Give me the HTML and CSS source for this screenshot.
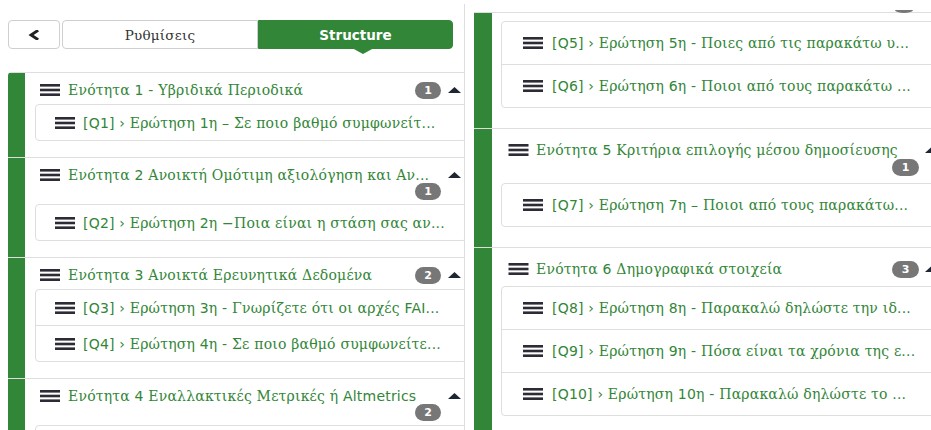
FILE: index.html
```html
<!DOCTYPE html>
<html lang="el">
<head>
<meta charset="utf-8">
<title>Structure</title>
<link rel="stylesheet" href="styles.css">
</head>
<body>
<div class="screen">

  <aside class="panel panel-left">
    <div class="tabs">
      <button class="tab tab-back" type="button" aria-label="Πίσω">
        <svg class="chevron" viewBox="0 0 12 10"><path d="M9 1 3 5l6 4"/></svg>
      </button>
      <button class="tab tab-settings" type="button">Ρυθμίσεις</button>
      <button class="tab tab-structure" type="button"><span class="lat">Structure</span></button>
    </div>

    <div class="tree">
      <section class="group">
        <div class="bar"></div>
        <div class="group-body">
          <div class="head">
            <svg class="burger" viewBox="0 0 20 12"><rect width="20" height="2.6"/><rect y="4.7" width="20" height="2.6"/><rect y="9.4" width="20" height="2.6"/></svg>
            <span class="title">Ενότητα<span class="lat"> 1 - </span>Υβριδικά Περιοδικά</span>
            <span class="badge">1</span>
            <svg class="caret" viewBox="0 0 13 6"><path d="M0 6 6.5 0 13 6z"/></svg>
          </div>
          <ul class="qlist">
            <li><svg class="burger" viewBox="0 0 20 12"><rect width="20" height="2.6"/><rect y="4.7" width="20" height="2.6"/><rect y="9.4" width="20" height="2.6"/></svg><span class="q"><span class="lat">[Q1] › </span>Ερώτηση <span class="lat">1</span>η – Σε ποιο βαθμό συμφωνείτ<span class="lat">...</span></span></li>
          </ul>
        </div>
      </section>

      <section class="group">
        <div class="bar"></div>
        <div class="group-body">
          <div class="head wrap">
            <svg class="burger" viewBox="0 0 20 12"><rect width="20" height="2.6"/><rect y="4.7" width="20" height="2.6"/><rect y="9.4" width="20" height="2.6"/></svg>
            <span class="title">Ενότητα<span class="lat"> 2 </span>Ανοικτή Ομότιμη αξιολόγηση και Αν<span class="lat">...</span></span>
            <span class="badge">1</span>
            <svg class="caret" viewBox="0 0 13 6"><path d="M0 6 6.5 0 13 6z"/></svg>
          </div>
          <ul class="qlist">
            <li><svg class="burger" viewBox="0 0 20 12"><rect width="20" height="2.6"/><rect y="4.7" width="20" height="2.6"/><rect y="9.4" width="20" height="2.6"/></svg><span class="q"><span class="lat">[Q2] › </span>Ερώτηση <span class="lat">2</span>η −Ποια είναι η στάση σας αν<span class="lat">...</span></span></li>
          </ul>
        </div>
      </section>

      <section class="group">
        <div class="bar"></div>
        <div class="group-body">
          <div class="head">
            <svg class="burger" viewBox="0 0 20 12"><rect width="20" height="2.6"/><rect y="4.7" width="20" height="2.6"/><rect y="9.4" width="20" height="2.6"/></svg>
            <span class="title">Ενότητα<span class="lat"> 3 </span>Ανοικτά Ερευνητικά Δεδομένα</span>
            <span class="badge">2</span>
            <svg class="caret" viewBox="0 0 13 6"><path d="M0 6 6.5 0 13 6z"/></svg>
          </div>
          <ul class="qlist">
            <li><svg class="burger" viewBox="0 0 20 12"><rect width="20" height="2.6"/><rect y="4.7" width="20" height="2.6"/><rect y="9.4" width="20" height="2.6"/></svg><span class="q"><span class="lat">[Q3] › </span>Ερώτηση <span class="lat">3</span>η <span class="lat">-</span> Γνωρίζετε ότι οι αρχές <span class="lat">FAI...</span></span></li>
            <li><svg class="burger" viewBox="0 0 20 12"><rect width="20" height="2.6"/><rect y="4.7" width="20" height="2.6"/><rect y="9.4" width="20" height="2.6"/></svg><span class="q"><span class="lat">[Q4] › </span>Ερώτηση <span class="lat">4</span>η <span class="lat">-</span> Σε ποιο βαθμό συμφωνείτε<span class="lat">...</span></span></li>
          </ul>
        </div>
      </section>

      <section class="group">
        <div class="bar"></div>
        <div class="group-body">
          <div class="head wrap">
            <svg class="burger" viewBox="0 0 20 12"><rect width="20" height="2.6"/><rect y="4.7" width="20" height="2.6"/><rect y="9.4" width="20" height="2.6"/></svg>
            <span class="title">Ενότητα<span class="lat"> 4 </span>Εναλλακτικές Μετρικές ή <span class="lat">Altmetrics</span></span>
            <span class="badge">2</span>
            <svg class="caret" viewBox="0 0 13 6"><path d="M0 6 6.5 0 13 6z"/></svg>
          </div>
          <ul class="qlist">
            <li></li>
          </ul>
        </div>
      </section>
    </div>
  </aside>

  <main class="panel panel-right">
    <div class="peek"><span class="badge-tail"></span></div>

    <div class="tree">
      <section class="group cont">
        <div class="bar"></div>
        <div class="group-body">
          <ul class="qlist">
            <li><svg class="burger" viewBox="0 0 20 12"><rect width="20" height="2.6"/><rect y="4.7" width="20" height="2.6"/><rect y="9.4" width="20" height="2.6"/></svg><span class="q"><span class="lat">[Q5] › </span>Ερώτηση <span class="lat">5</span>η <span class="lat">-</span> Ποιες από τις παρακάτω υ<span class="lat">...</span></span></li>
            <li><svg class="burger" viewBox="0 0 20 12"><rect width="20" height="2.6"/><rect y="4.7" width="20" height="2.6"/><rect y="9.4" width="20" height="2.6"/></svg><span class="q"><span class="lat">[Q6] › </span>Ερώτηση <span class="lat">6</span>η <span class="lat">-</span> Ποιοι από τους παρακάτω <span class="lat">...</span></span></li>
          </ul>
        </div>
      </section>

      <section class="group">
        <div class="bar"></div>
        <div class="group-body">
          <div class="head wrap">
            <svg class="burger" viewBox="0 0 20 12"><rect width="20" height="2.6"/><rect y="4.7" width="20" height="2.6"/><rect y="9.4" width="20" height="2.6"/></svg>
            <span class="title">Ενότητα<span class="lat"> 5 </span>Κριτήρια επιλογής μέσου δημοσίευσης</span>
            <span class="badge">1</span>
            <svg class="caret" viewBox="0 0 13 6"><path d="M0 6 6.5 0 13 6z"/></svg>
          </div>
          <ul class="qlist">
            <li><svg class="burger" viewBox="0 0 20 12"><rect width="20" height="2.6"/><rect y="4.7" width="20" height="2.6"/><rect y="9.4" width="20" height="2.6"/></svg><span class="q"><span class="lat">[Q7] › </span>Ερώτηση <span class="lat">7</span>η – Ποιοι από τους παρακάτω<span class="lat">...</span></span></li>
          </ul>
        </div>
      </section>

      <section class="group">
        <div class="bar"></div>
        <div class="group-body">
          <div class="head">
            <svg class="burger" viewBox="0 0 20 12"><rect width="20" height="2.6"/><rect y="4.7" width="20" height="2.6"/><rect y="9.4" width="20" height="2.6"/></svg>
            <span class="title">Ενότητα<span class="lat"> 6 </span>Δημογραφικά στοιχεία</span>
            <span class="badge">3</span>
            <svg class="caret" viewBox="0 0 13 6"><path d="M0 6 6.5 0 13 6z"/></svg>
          </div>
          <ul class="qlist">
            <li><svg class="burger" viewBox="0 0 20 12"><rect width="20" height="2.6"/><rect y="4.7" width="20" height="2.6"/><rect y="9.4" width="20" height="2.6"/></svg><span class="q"><span class="lat">[Q8] › </span>Ερώτηση <span class="lat">8</span>η <span class="lat">-</span> Παρακαλώ δηλώστε την ιδ<span class="lat">...</span></span></li>
            <li><svg class="burger" viewBox="0 0 20 12"><rect width="20" height="2.6"/><rect y="4.7" width="20" height="2.6"/><rect y="9.4" width="20" height="2.6"/></svg><span class="q"><span class="lat">[Q9] › </span>Ερώτηση <span class="lat">9</span>η <span class="lat">-</span> Πόσα είναι τα χρόνια της ε<span class="lat">...</span></span></li>
            <li><svg class="burger" viewBox="0 0 20 12"><rect width="20" height="2.6"/><rect y="4.7" width="20" height="2.6"/><rect y="9.4" width="20" height="2.6"/></svg><span class="q"><span class="lat">[Q10] › </span>Ερώτηση <span class="lat">10</span>η <span class="lat">-</span> Παρακαλώ δηλώστε το <span class="lat">...</span></span></li>
          </ul>
        </div>
      </section>
    </div>
  </main>

</div>
</body>
</html>
```

FILE: styles.css
```css
* {
  box-sizing: border-box;
}

html,
body {
  margin: 0;
  background: #fff;
}

body {
  font-family: "DejaVu Serif", serif;
  font-size: 14px;
  letter-spacing: 0.2px;
  color: #328637;
}

/* Latin text, digits and punctuation use the sans face */
.lat {
  font-family: "DejaVu Sans", sans-serif;
}

.screen {
  display: flex;
  height: 430px;
  overflow: hidden;
}

.panel {
  overflow: hidden;
}

/* ---------- left side menu ---------- */

.panel-left {
  flex: none;
  width: 465px;
  margin-top: 4px;
  padding: 16px 0 0 8px;
  border-right: 1px solid #dedede;
}

.tabs {
  display: flex;
  height: 29px;
  width: 445px;
}

.tab {
  margin: 0;
  padding: 0;
  display: flex;
  align-items: center;
  justify-content: center;
  border: 1px solid #cfcfcf;
  background: #fff;
  color: #333;
  font-family: "DejaVu Serif", serif;
  font-size: 13.5px;
  letter-spacing: 0.2px;
}

.tab-back {
  width: 52px;
  margin-right: 2px;
  border-radius: 4px;
}

.chevron {
  width: 12px;
  height: 10px;
  fill: none;
  stroke: #222;
  stroke-width: 2.8;
  stroke-linecap: square;
}

.tab-settings {
  width: 196px;
  border-radius: 4px 0 0 4px;
}

.tab-structure {
  position: relative;
  width: 195px;
  background: #328637;
  border-color: #328637;
  color: #fff;
  font-weight: bold;
  letter-spacing: 0;
  border-radius: 0 4px 4px 0;
}

.tab-structure::after {
  content: "";
  position: absolute;
  top: 100%;
  left: 93px;
  border-style: solid;
  border-width: 6px 11px 0;
  border-color: #328637 transparent transparent;
}

/* ---------- question tree ---------- */

.tree {
  width: 459px;
}

.panel-left .tree {
  margin-top: 23px;
  border-top-left-radius: 4px;
  overflow: hidden;
}

.group {
  display: flex;
  border-top: 1px solid #dedede;
}

.bar {
  flex: none;
  width: 17px;
  background: #328637;
}

.group-body {
  flex: 1;
  min-width: 0;
  padding: 7px 0 16px 0;
}

.head {
  display: grid;
  grid-template-columns: auto 1fr auto auto;
  align-items: center;
  line-height: 20px;
  padding: 0 6px 0 15px;
  margin-bottom: 4px;
}

.burger {
  flex: none;
  width: 20px;
  height: 12px;
  margin-right: 8px;
  fill: #2b2c35;
}

.head .burger {
  grid-row: 1;
  grid-column: 1;
}

.title {
  grid-row: 1;
  grid-column: 2;
  white-space: nowrap;
  overflow: hidden;
}

.badge {
  grid-row: 1;
  grid-column: 3;
  width: 26px;
  height: 17px;
  margin-right: 7px;
  border-radius: 9px;
  background: #777;
  color: #fff;
  font: bold 11px/17px "DejaVu Sans", sans-serif;
  letter-spacing: 0;
  text-align: center;
}

.caret {
  grid-row: 1;
  grid-column: 4;
  width: 13px;
  height: 6px;
  fill: #1e2633;
}

/* title too long: the count drops to a second line */
.head.wrap .title {
  grid-column: 2 / 4;
}

.head.wrap .badge {
  grid-row: 2;
  margin-top: -2px;
}

.qlist {
  margin: 0 0 0 10px;
  padding: 0;
  list-style: none;
  border: 1px solid #dedede;
  border-radius: 4px;
}

.qlist li {
  box-sizing: content-box;
  height: 35px;
  display: flex;
  align-items: center;
  padding-left: 19px;
  white-space: nowrap;
  overflow: hidden;
}

.qlist li + li {
  border-top: 1px solid #dedede;
}

/* ---------- right pane (scrolled further down) ---------- */

.panel-right {
  flex: 1;
  min-width: 0;
  padding-left: 9px;
}

.peek {
  display: flex;
  justify-content: flex-end;
  align-items: flex-end;
  width: 467px;
  height: 12px;
  padding-right: 28px;
}

.badge-tail {
  width: 18px;
  height: 3px;
  margin-bottom: -1px;
  border-radius: 0 0 9px 9px / 0 0 3px 3px;
  background: #777;
}

.panel-right .tree {
  width: 467px;
}

.panel-right .bar {
  width: 18px;
}

.panel-right .group-body {
  padding: 11px 0 20px 0;
}

.panel-right .group.cont .group-body {
  padding-top: 8px;
}

.panel-right .head {
  padding: 0 3px 0 16px;
  margin-bottom: 7px;
}

.panel-right .head .burger {
  width: 21px;
  margin-right: 7px;
}

.panel-right .badge {
  width: 27px;
  margin-right: 6px;
}

.panel-right .head.wrap .badge {
  margin-top: -1px;
}

.panel-right .qlist {
  margin-left: 9px;
}

.panel-right .qlist li {
  height: 42px;
  padding-left: 21px;
}

.panel-right .qlist .burger {
  margin-right: 9px;
}
```
